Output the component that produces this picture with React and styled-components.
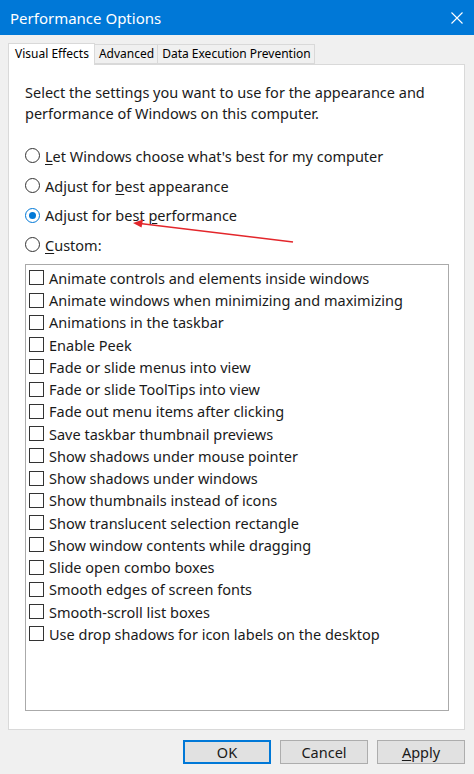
import styled, { createGlobalStyle } from 'styled-components';

const GlobalStyle = createGlobalStyle`
  html, body {
    margin: 0;
    padding: 0;
    background: #f0f0f0;
  }
  body {
    font-family: "Noto Sans", "Open Sans", "Liberation Sans", sans-serif;
    color: #000;
  }
`;

const Window = styled.div`
  position: relative;
  width: 474px;
  height: 774px;
  display: flex;
  flex-direction: column;
  background: #f0f0f0;
  box-sizing: border-box;
  overflow: hidden;
`;

const TitleBar = styled.div`
  height: 35px;
  flex: none;
  background: #0078d7;
  color: #fff;
  display: flex;
  align-items: center;
  justify-content: space-between;
  padding: 0 11px 0 10px;
  font-size: 15px;
`;

const CloseIcon = styled.svg`
  width: 12px;
  height: 12px;
`;

const Body = styled.div`
  flex: 1;
  display: flex;
  flex-direction: column;
  padding: 8px 9px 0 8px;
`;

const TabStrip = styled.div`
  display: flex;
  align-items: flex-end;
  height: 21px;
  position: relative;
  z-index: 1;
`;

const Tab = styled.div`
  box-sizing: border-box;
  height: ${p => (p.$active ? '22px' : '20px')};
  margin-bottom: ${p => (p.$active ? '-1px' : '0')};
  padding: ${p => (p.$active ? '0 5px 0 6px' : '0 3px 0 4px')};
  background: ${p => (p.$active ? '#fff' : '#f0f0f0')};
  border: 1px solid #d9d9d9;
  border-bottom: ${p => (p.$active ? 'none' : '1px solid #d9d9d9')};
  border-left: ${p => (p.$active ? '1px solid #d9d9d9' : 'none')};
  font-size: 12px;
  line-height: ${p => (p.$active ? '19px' : '18px')};
  white-space: nowrap;
`;

const Panel = styled.div`
  box-sizing: border-box;
  height: 666px;
  background: #fff;
  border: 1px solid #d9d9d9;
  padding: 17px 14px 0 16px;
  display: flex;
  flex-direction: column;
`;

const Intro = styled.p`
  margin: 0 0 17px 0;
  font-size: 14.5px;
  line-height: 21px;
  color: #1a1a1a;
`;

const RadioRow = styled.label`
  display: flex;
  align-items: center;
  height: 29.7px;
  font-size: 14.5px;
  gap: 5px;
  color: #1a1a1a;
`;

const RadioCircle = styled.span`
  box-sizing: border-box;
  width: 15px;
  height: 15px;
  border-radius: 50%;
  border: 1px solid ${p => (p.$checked ? '#0078d7' : '#333')};
  display: flex;
  align-items: center;
  justify-content: center;
  flex: none;
  &::after {
    content: '';
    display: ${p => (p.$checked ? 'block' : 'none')};
    width: 7px;
    height: 7px;
    border-radius: 50%;
    background: #0078d7;
  }
`;

const Key = styled.span`
  text-decoration: underline;
  text-underline-offset: 2px;
`;

const ListBox = styled.div`
  box-sizing: border-box;
  margin-top: 4px;
  width: 424px;
  height: 447px;
  border: 1px solid #aaa;
  padding: 2px 3px;
`;

const CheckRow = styled.label`
  display: flex;
  align-items: center;
  height: 22.25px;
  gap: 5px;
  font-size: 14.5px;
  color: #1a1a1a;
  white-space: nowrap;
`;

const CheckBox = styled.span`
  box-sizing: border-box;
  width: 15px;
  height: 15px;
  border: 1px solid #333;
  background: #fff;
  flex: none;
`;

const ButtonRow = styled.div`
  display: flex;
  justify-content: flex-end;
  gap: 9px;
  margin-top: 10px;
`;

const Button = styled.button`
  box-sizing: border-box;
  width: 88px;
  height: 24px;
  background: #e1e1e1;
  border: 1px solid ${p => (p.$default ? '#0078d7' : '#adadad')};
  box-shadow: ${p => (p.$default ? 'inset 0 0 0 1px #0078d7' : 'none')};
  font-family: inherit;
  font-size: 14.5px;
  color: #1a1a1a;
  padding: 0;
  line-height: 20px;
`;

const Arrow = styled.svg`
  position: absolute;
  left: 0;
  top: 0;
  pointer-events: none;
`;

const effects = [
  'Animate controls and elements inside windows',
  'Animate windows when minimizing and maximizing',
  'Animations in the taskbar',
  'Enable Peek',
  'Fade or slide menus into view',
  'Fade or slide ToolTips into view',
  'Fade out menu items after clicking',
  'Save taskbar thumbnail previews',
  'Show shadows under mouse pointer',
  'Show shadows under windows',
  'Show thumbnails instead of icons',
  'Show translucent selection rectangle',
  'Show window contents while dragging',
  'Slide open combo boxes',
  'Smooth edges of screen fonts',
  'Smooth-scroll list boxes',
  'Use drop shadows for icon labels on the desktop'
];

export default function App() {
  return (
    <Window>
      <GlobalStyle />
      <TitleBar>
        <span>Performance Options</span>
        <CloseIcon viewBox="0 0 12 12">
          <path d="M0.5 0.5 L11.5 11.5 M11.5 0.5 L0.5 11.5" stroke="#fff" strokeWidth="1.1" fill="none" />
        </CloseIcon>
      </TitleBar>
      <Body>
        <TabStrip>
          <Tab $active>Visual Effects</Tab>
          <Tab>Advanced</Tab>
          <Tab>Data Execution Prevention</Tab>
        </TabStrip>
        <Panel>
          <Intro>
            Select the settings you want to use for the appearance and
            <br />
            performance of Windows on this computer.
          </Intro>
          <RadioRow>
            <RadioCircle />
            <span><Key>L</Key>et Windows choose what's best for my computer</span>
          </RadioRow>
          <RadioRow>
            <RadioCircle />
            <span>Adjust for <Key>b</Key>est appearance</span>
          </RadioRow>
          <RadioRow>
            <RadioCircle $checked />
            <span>Adjust for best <Key>p</Key>erformance</span>
          </RadioRow>
          <RadioRow>
            <RadioCircle />
            <span><Key>C</Key>ustom:</span>
          </RadioRow>
          <ListBox>
            {effects.map(e => (
              <CheckRow key={e}>
                <CheckBox />
                <span>{e}</span>
              </CheckRow>
            ))}
          </ListBox>
        </Panel>
        <ButtonRow>
          <Button $default>OK</Button>
          <Button>Cancel</Button>
          <Button><Key>A</Key>pply</Button>
        </ButtonRow>
      </Body>
      <Arrow width="474" height="774" viewBox="0 0 474 774">
        <line x1="293" y1="242" x2="140" y2="223.5" stroke="#e3262b" strokeWidth="1.6" />
        <path d="M133 223 L143 219.5 L141.5 227.5 Z" fill="#e3262b" />
      </Arrow>
    </Window>
  );
}
